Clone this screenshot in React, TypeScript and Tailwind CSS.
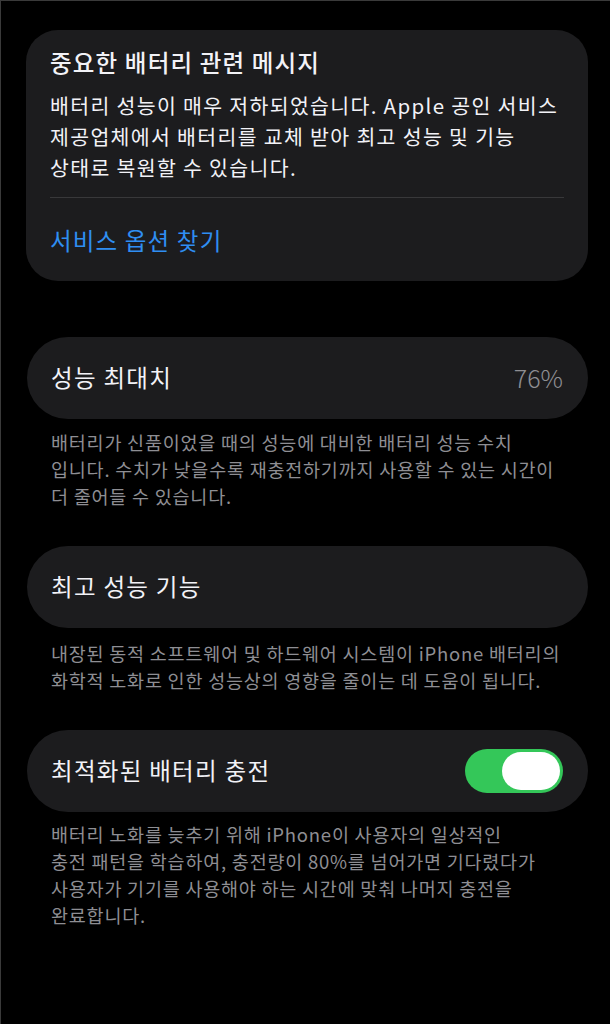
import React from 'react';

const FONT = '"Noto Sans CJK KR", "Noto Sans", sans-serif';

function Footer({ lines, className = '' }: { lines: string[]; className?: string }) {
  return (
    <div className={`pl-[50px] text-[18.5px] leading-[27px] tracking-[0.042em] text-[#8e8e93] ${className}`}>
      {lines.map(l => (
        <div key={l} className="whitespace-nowrap">{l}</div>
      ))}
    </div>
  );
}

function Row({ children }: { children: React.ReactNode }) {
  return (
    <div className="ml-[26px] mr-[22px] h-[82px] rounded-full bg-[#1c1c1e] pl-[24px] pr-[25px] flex items-center justify-between">
      {children}
    </div>
  );
}

export default function App() {
  return (
    <div
      className="min-h-[1024px] w-[610px] bg-black text-[#f2f2f7] pt-[29px] border-l border-t border-[#3a3a3a]"
      style={{ fontFamily: FONT }}
    >
      <div className="ml-[25px] mr-[22px] rounded-[32px] bg-[#1c1c1e] px-[24px] pt-[17px] pb-[26px]">
        <div className="text-[23.5px] leading-[30px] font-medium tracking-[0.05em]">중요한 배터리 관련 메시지</div>
        <div className="mt-[13px] text-[20.5px] leading-[31px] tracking-[0.065em]">
          <div className="whitespace-nowrap">배터리 성능이 매우 저하되었습니다. Apple 공인 서비스</div>
          <div className="whitespace-nowrap">제공업체에서 배터리를 교체 받아 최고 성능 및 기능</div>
          <div className="whitespace-nowrap">상태로 복원할 수 있습니다.</div>
        </div>
        <div className="mt-[14px] h-px bg-[#38383a]" />
        <div className="mt-[27px] text-[23.5px] leading-[30px] tracking-[0.05em] text-[#2f8ef2]">서비스 옵션 찾기</div>
      </div>

      <div className="mt-[56px]">
        <Row>
          <span className="text-[23.5px] tracking-[0.055em]">성능 최대치</span>
          <span className="text-[25px] font-light text-[#8e8e93]">76%</span>
        </Row>
      </div>
      <Footer
        className="mt-[10px]"
        lines={[
          '배터리가 신품이었을 때의 성능에 대비한 배터리 성능 수치',
          '입니다. 수치가 낮을수록 재충전하기까지 사용할 수 있는 시간이',
          '더 줄어들 수 있습니다.',
        ]}
      />

      <div className="mt-[36px]">
        <Row>
          <span className="text-[23.5px] tracking-[0.055em]">최고 성능 기능</span>
        </Row>
      </div>
      <Footer
        className="mt-[12px]"
        lines={[
          '내장된 동적 소프트웨어 및 하드웨어 시스템이 iPhone 배터리의',
          '화학적 노화로 인한 성능상의 영향을 줄이는 데 도움이 됩니다.',
        ]}
      />

      <div className="mt-[36px]">
        <Row>
          <span className="text-[23.5px] tracking-[0.055em]">최적화된 배터리 충전</span>
          <div className="w-[98px] h-[44px] rounded-full bg-[#34c759] p-[3px] flex justify-end">
            <div className="w-[58px] h-[38px] rounded-full bg-white" />
          </div>
        </Row>
      </div>
      <Footer
        className="mt-[9px]"
        lines={[
          '배터리 노화를 늦추기 위해 iPhone이 사용자의 일상적인',
          '충전 패턴을 학습하여, 충전량이 80%를 넘어가면 기다렸다가',
          '사용자가 기기를 사용해야 하는 시간에 맞춰 나머지 충전을',
          '완료합니다.',
        ]}
      />
    </div>
  );
}
